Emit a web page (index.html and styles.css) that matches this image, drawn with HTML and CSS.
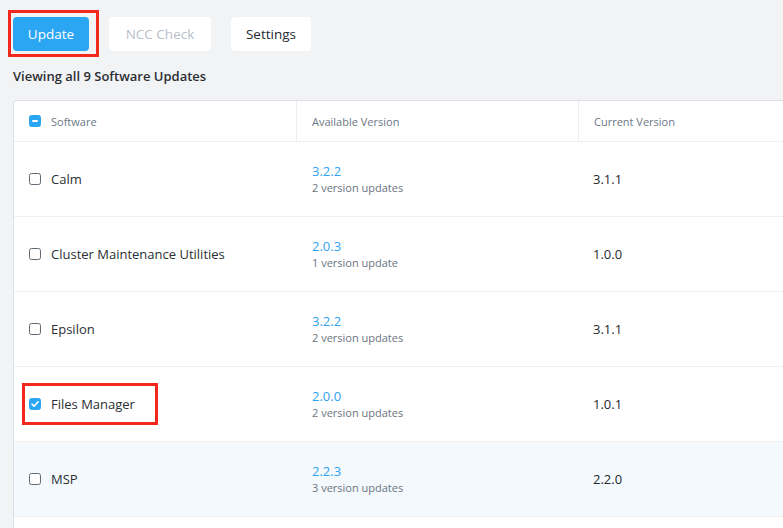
FILE: index.html
```html
<!DOCTYPE html>
<html>
<head>
<meta charset="utf-8">
<link rel="stylesheet" href="styles.css">
</head>
<body>
<div class="page">
  <div class="toolbar">
    <span class="mark mark-btn"><button class="btn btn-primary">Update</button></span>
    <button class="btn btn-disabled">NCC Check</button>
    <button class="btn btn-default">Settings</button>
  </div>
  <div class="summary">Viewing all 9 Software Updates</div>
  <div class="card">
    <div class="row head">
      <div class="cell c1"><span class="cb cb-partial"><span class="dash"></span></span><span class="hlabel">Software</span></div>
      <div class="cell c2 hcell">Available Version</div>
      <div class="cell c3 hcell">Current Version</div>
    </div>
    <div class="row">
      <div class="cell c1"><span class="cb"></span><span class="name">Calm</span></div>
      <div class="cell c2"><div class="ver">3.2.2</div><div class="sub">2 version updates</div></div>
      <div class="cell c3 cur">3.1.1</div>
    </div>
    <div class="row">
      <div class="cell c1"><span class="cb"></span><span class="name">Cluster Maintenance Utilities</span></div>
      <div class="cell c2"><div class="ver">2.0.3</div><div class="sub">1 version update</div></div>
      <div class="cell c3 cur">1.0.0</div>
    </div>
    <div class="row">
      <div class="cell c1"><span class="cb"></span><span class="name">Epsilon</span></div>
      <div class="cell c2"><div class="ver">3.2.2</div><div class="sub">2 version updates</div></div>
      <div class="cell c3 cur">3.1.1</div>
    </div>
    <div class="row">
      <div class="cell c1"><span class="mark mark-row"><span class="cb cb-checked"><svg viewBox="0 0 12 12" width="12" height="12"><path d="M3 6.2 L5.1 8.2 L9 3.9" fill="none" stroke="#fff" stroke-width="1.6" stroke-linecap="round" stroke-linejoin="round"/></svg></span><span class="name">Files Manager</span></span></div>
      <div class="cell c2"><div class="ver">2.0.0</div><div class="sub">2 version updates</div></div>
      <div class="cell c3 cur">1.0.1</div>
    </div>
    <div class="row hover">
      <div class="cell c1"><span class="cb"></span><span class="name">MSP</span></div>
      <div class="cell c2"><div class="ver">2.2.3</div><div class="sub">3 version updates</div></div>
      <div class="cell c3 cur">2.2.0</div>
    </div>
    <div class="row blank"></div>
  </div>
</div>
</body>
</html>
```

FILE: styles.css
```css
html, body {
  margin: 0;
  padding: 0;
  background: #f2f3f5;
  overflow: hidden;
  height: 528px;
}
body {
  font-family: "Open Sans", "Lato", sans-serif;
  color: #2b2f33;
}
.page {
  padding: 17px 0 0 13px;
  width: 880px;
}
.toolbar {
  display: flex;
  align-items: center;
  gap: 20px;
  height: 34px;
}
.btn {
  height: 34px;
  border: none;
  border-radius: 4px;
  font-family: inherit;
  font-size: 13.5px;
  padding: 0;
  display: block;
}
.btn-primary {
  width: 76px;
  background: #2ba6f3;
  color: #fff;
}
.btn-disabled {
  width: 102px;
  background: #fff;
  color: #b9c0c9;
}
.btn-default {
  width: 80px;
  background: #fff;
  color: #24282d;
}
.mark {
  border: 3px solid #f3271c;
  display: inline-flex;
  align-items: center;
}
.mark-btn {
  margin: -7px -10px -6px -5px;
  padding: 4px 7px 3px 2px;
}
.summary {
  margin-top: 17px;
  font-size: 13px;
  font-weight: 600;
  color: #2b2f33;
  height: 16px;
  line-height: 16px;
}
.card {
  margin-top: 16px;
  background: #fff;
  border: 1px solid #dcdfe4;
  border-radius: 4px;
  width: 850px;
}
.row {
  display: grid;
  grid-template-columns: 282px 282px 1fr;
  height: 74px;
  border-bottom: 1px solid #eff0f2;
}
.row.head {
  height: 40px;
}
.row.hover {
  background: #f3f9fd;
}
.row.blank {
  border-bottom: none;
}
.cell {
  display: flex;
  align-items: center;
  padding-left: 15px;
  font-size: 13px;
}
.c2, .c3 {
  border-left: 1px solid transparent;
}
.head .c2, .head .c3 {
  border-left-color: #eceef1;
}
.c2 {
  flex-direction: column;
  align-items: flex-start;
  justify-content: center;
  padding-top: 0;
}
.head .c2 {
  flex-direction: row;
  align-items: center;
  justify-content: flex-start;
}
.hlabel, .hcell {
  font-size: 11px;
  color: #6c7886;
}
.cb {
  width: 12px;
  height: 12px;
  box-sizing: border-box;
  border: 1px solid #626a74;
  border-radius: 2.5px;
  background: #fff;
  margin-right: 10px;
  flex: none;
  display: inline-flex;
  align-items: center;
  justify-content: center;
}
.cb-partial, .cb-checked {
  background: #2ba6f3;
  border-color: #2ba6f3;
}
.cb-checked svg {
  display: block;
  margin: -1px;
}
.dash {
  width: 6px;
  height: 2px;
  background: #fff;
  border-radius: 1px;
}
.name {
  color: #2b2f33;
  font-size: 13px;
}
.mark-row {
  margin: -12px -20px -12px -7px;
  padding: 9px 20px 9px 4px;
}
.ver {
  color: #2ea3f2;
  font-size: 13px;
  line-height: 17px;
}
.sub {
  color: #6b7480;
  font-size: 11px;
  line-height: 14px;
  margin-top: 1px;
}
.cur {
  color: #24282d;
  font-size: 13px;
  padding-left: 14px;
}
```
